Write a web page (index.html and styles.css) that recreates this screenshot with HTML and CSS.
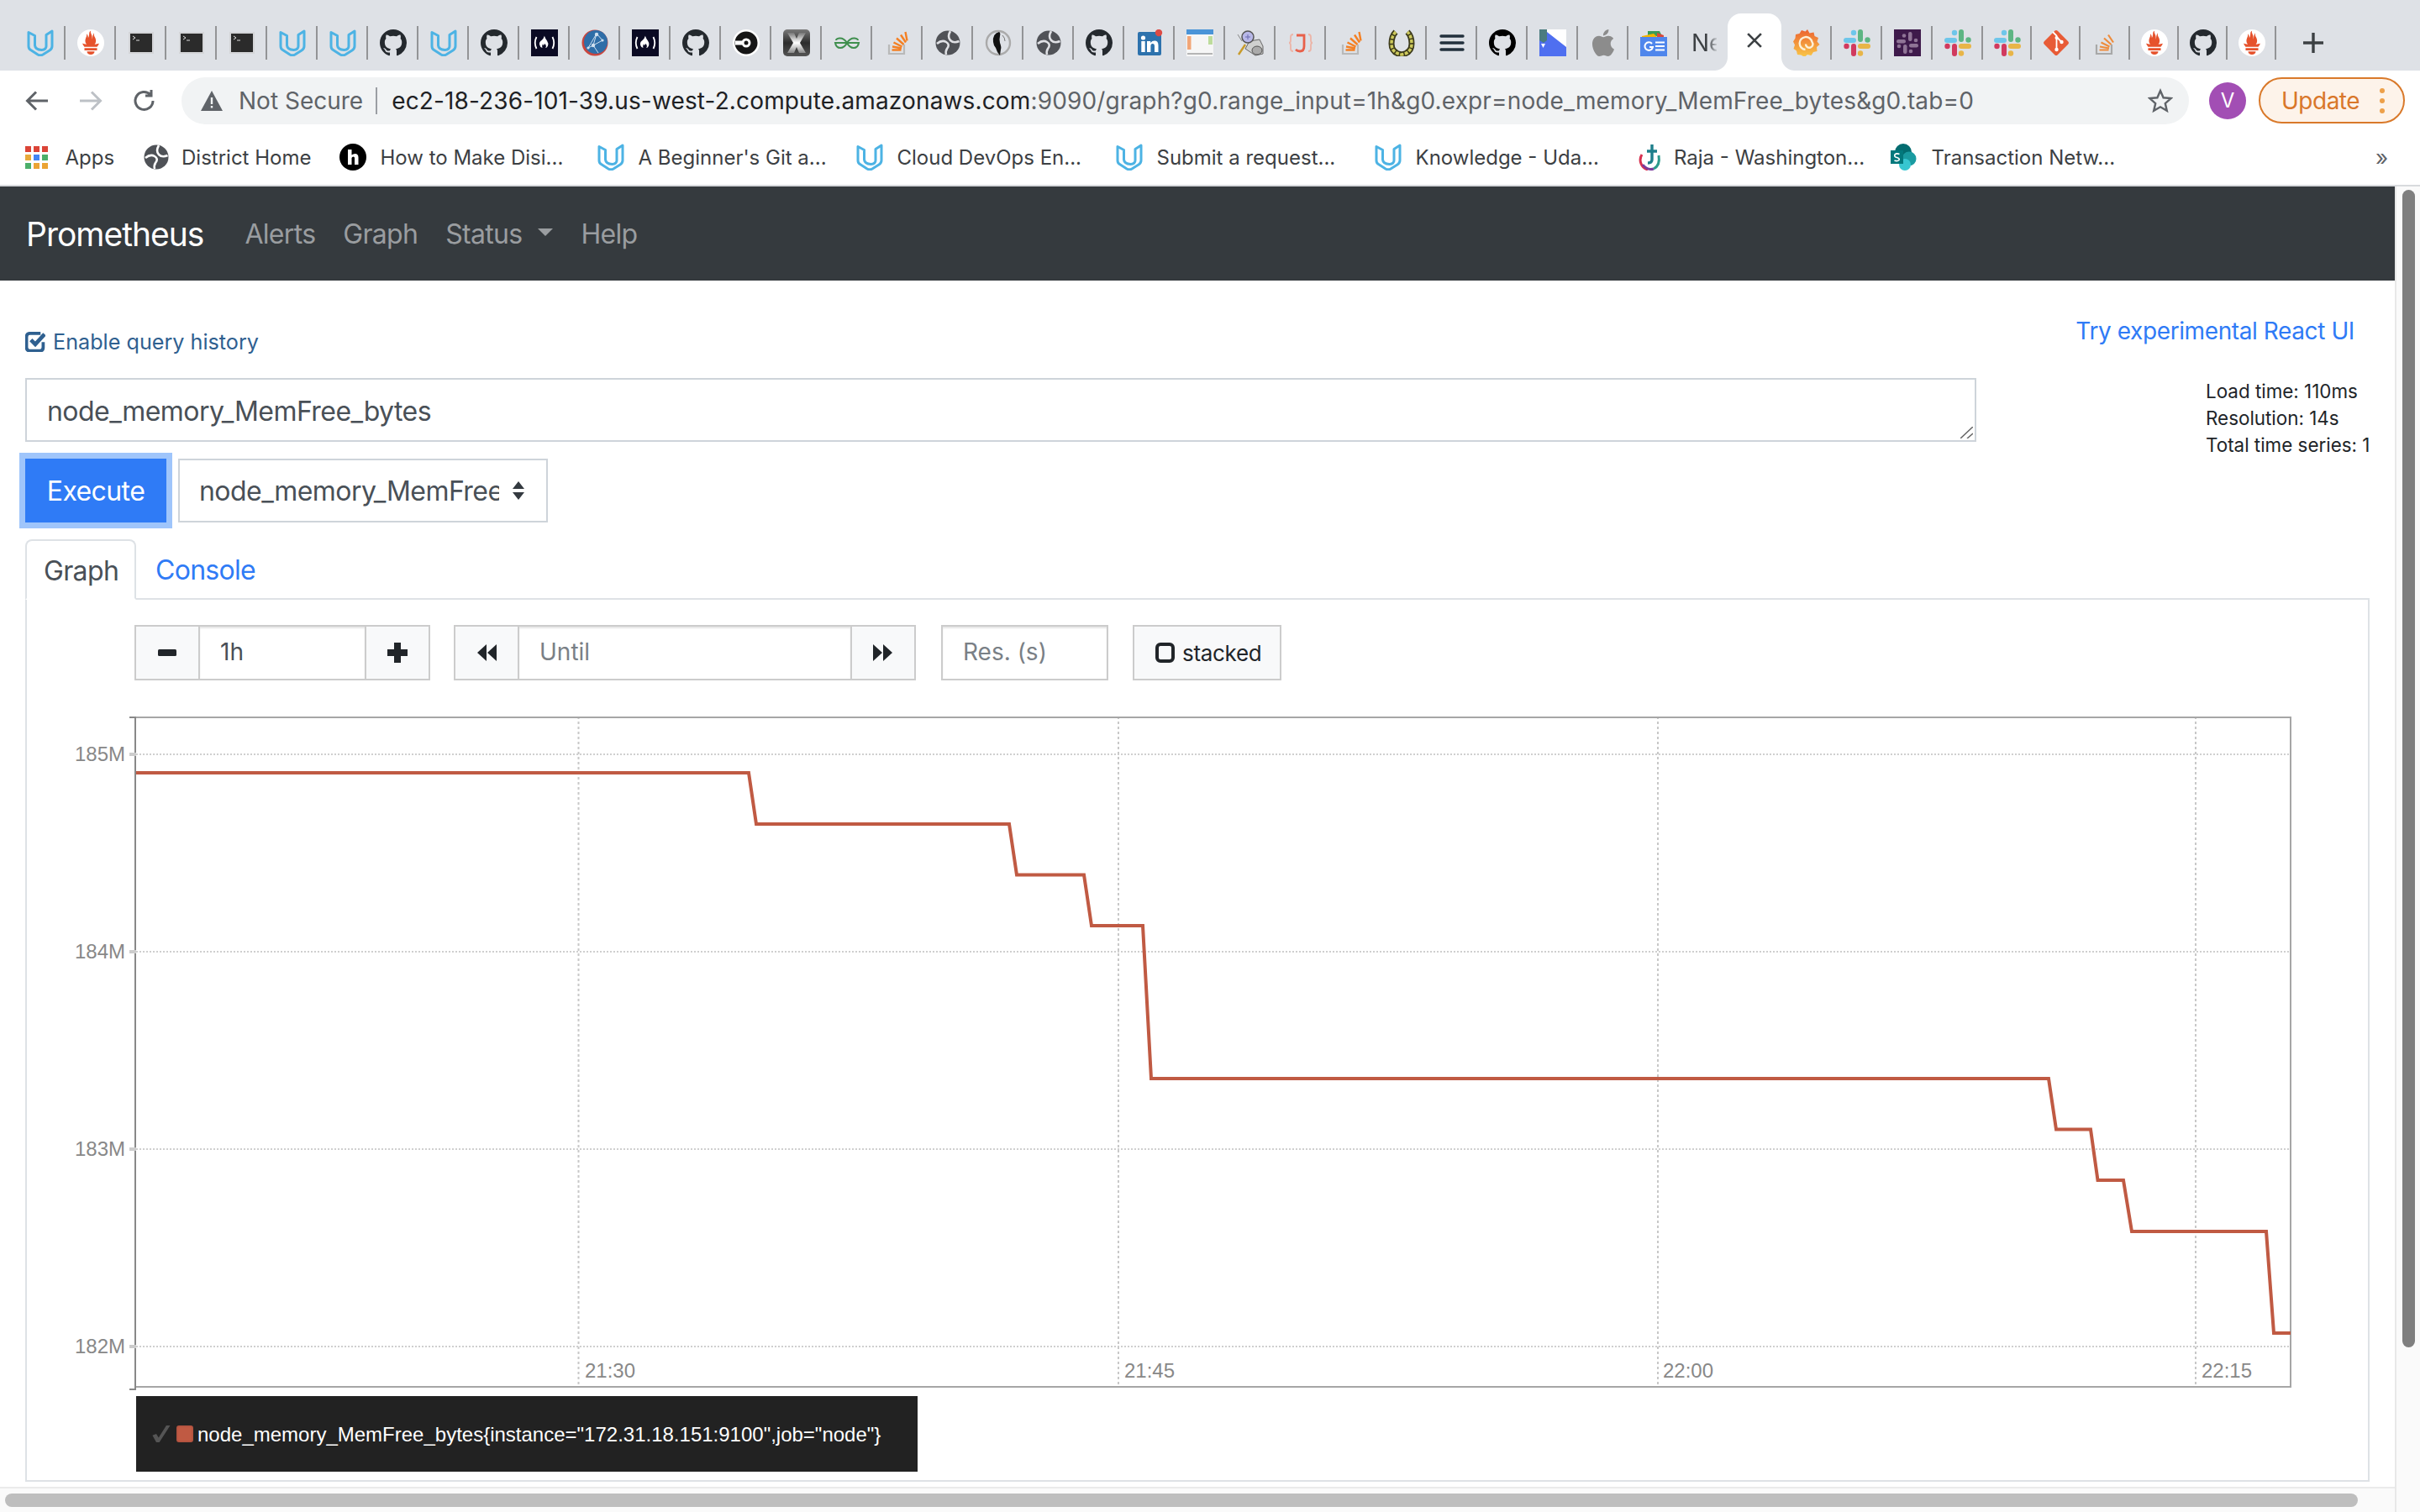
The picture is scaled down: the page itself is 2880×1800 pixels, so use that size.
FILE: index.html
```html
<!DOCTYPE html>
<html lang="en">
<head>
<meta charset="utf-8">
<title>Prometheus Time Series Collection and Processing Server</title>
<link rel="stylesheet" href="styles.css">
</head>
<body>
<svg class="sprite" xmlns="http://www.w3.org/2000/svg">
  <defs>
    <linearGradient id="gx" x1="0" y1="0" x2="0" y2="1"><stop offset="0" stop-color="#7a7a7a"/><stop offset=".5" stop-color="#2c2c2c"/><stop offset="1" stop-color="#555"/></linearGradient>
    <linearGradient id="gxw" x1="0" y1="0" x2="0" y2="1"><stop offset="0" stop-color="#777"/><stop offset=".5" stop-color="#fff"/><stop offset="1" stop-color="#888"/></linearGradient>
    <linearGradient id="gg" x1="0" y1="0" x2="0" y2="1"><stop offset="0" stop-color="#ec6230"/><stop offset="1" stop-color="#f9c848"/></linearGradient>
  </defs>
  <symbol id="u" viewBox="0 0 32 32"><path d="M2 3.500V20q0 3 2.500 4.600L13 30q3 1.600 6 0l8-5q3-2 3-5V2l-7 4.500V20q0 4-5.500 4.500Q10 24 9.500 19V7.500z" fill="none" stroke="#4db3e4" stroke-width="3" stroke-linejoin="round"/></symbol>
  <symbol id="pw" viewBox="0 0 24 24"><circle cx="12" cy="12" r="12" fill="#fff"/><path fill="#e6522c" d="M12 22.460c-1.885 0-3.414-1.260-3.414-2.814h6.828c0 1.553-1.528 2.813-3.414 2.813zm5.640-3.745H6.360v-2.046h11.280v2.046zm-.04-3.098H6.391c-.037-.043-.075-.086-.111-.13-1.155-1.401-1.427-2.133-1.690-2.879-.005-.025 1.400.287 2.395.511 0 0 .513.119 1.262.255-.72-.843-1.147-1.915-1.147-3.010 0-2.406 1.845-4.508 1.180-6.207.648.053 1.340 1.367 1.387 3.422.689-.951.977-2.690.977-3.755 0-1.103.727-2.385 1.454-2.429-.648 1.069.168 1.984.894 4.256.272.854.237 2.290.447 3.201.07-1.892.395-4.652 1.595-5.605-.529 1.200.079 2.702.494 3.424.671 1.164 1.078 2.047 1.078 3.716a4.642 4.642 0 01-1.110 2.996c.792-.149 1.340-.283 1.340-.283l2.573-.502s-.374 1.538-1.813 3.019z"/></symbol>
  <symbol id="t" viewBox="0 0 32 32"><rect x="1" y="3" width="30" height="26" fill="#d4d5d8"/><rect x="3" y="5" width="26" height="22" fill="#2b2b2b"/><path d="M6 8l3 2-3 2" fill="none" stroke="#ddd" stroke-width="1"/><path d="M10 13h4" stroke="#ddd" stroke-width="1"/></symbol>
  <symbol id="g" viewBox="0 0 16 16"><path fill="#24292e" fill-rule="evenodd" d="M8 0C3.580 0 0 3.580 0 8c0 3.540 2.290 6.530 5.470 7.590.4.07.55-.17.55-.38 0-.19-.01-.82-.01-1.490-2.010.37-2.530-.49-2.690-.94-.09-.23-.48-.94-.82-1.130-.28-.15-.68-.52-.01-.53.63-.01 1.080.58 1.230.82.72 1.210 1.870.87 2.330.66.07-.52.28-.87.51-1.070-1.780-.2-3.640-.89-3.640-3.950 0-.87.31-1.590.82-2.150-.08-.2-.36-1.020.08-2.120 0 0 .67-.21 2.200.82.64-.18 1.320-.27 2-.27.68 0 1.360.09 2 .27 1.530-1.040 2.200-.82 2.200-.82.44 1.100.16 1.920.08 2.120.51.56.82 1.270.82 2.150 0 3.070-1.870 3.750-3.650 3.950.29.25.54.73.54 1.480 0 1.070-.01 1.930-.01 2.200 0 .21.15.46.55.38A8.013 8.013 0 0016 8c0-4.420-3.580-8-8-8z"/></symbol>
  <symbol id="gb" viewBox="0 0 16 16"><path fill="#000" fill-rule="evenodd" d="M8 0C3.580 0 0 3.580 0 8c0 3.540 2.290 6.530 5.470 7.590.4.07.55-.17.55-.38 0-.19-.01-.82-.01-1.490-2.010.37-2.530-.49-2.690-.94-.09-.23-.48-.94-.82-1.130-.28-.15-.68-.52-.01-.53.63-.01 1.080.58 1.230.82.72 1.210 1.870.87 2.330.66.07-.52.28-.87.51-1.070-1.780-.2-3.640-.89-3.640-3.950 0-.87.31-1.590.82-2.150-.08-.2-.36-1.020.08-2.120 0 0 .67-.21 2.200.82.64-.18 1.320-.27 2-.27.68 0 1.360.09 2 .27 1.530-1.040 2.200-.82 2.200-.82.44 1.100.16 1.920.08 2.120.51.56.82 1.270.82 2.150 0 3.070-1.870 3.750-3.650 3.950.29.25.54.73.54 1.480 0 1.070-.01 1.930-.01 2.200 0 .21.15.46.55.38A8.013 8.013 0 0016 8c0-4.420-3.580-8-8-8z"/></symbol>
  <symbol id="f" viewBox="0 0 32 32"><rect width="32" height="32" fill="#0a0a23"/><path d="M6.500 9Q3 16 6.500 23M25.500 9Q29 16 25.500 23" fill="none" stroke="#fff" stroke-width="1.800"/><path d="M16 8q1 3 3 5.500 2 3 1 6-1 2.500-3 2.500 2-2-.5-5-1.500 2-2 2-.5-1 0-2-2 1.500-1 5-3-1-3.500-4-.5-3 2.500-5 2.500-2 3.500-5.500z" fill="#fff"/></symbol>
  <symbol id="wb" viewBox="0 0 32 32"><circle cx="16" cy="16" r="15.500" fill="#c9463f"/><circle cx="17" cy="15" r="14" fill="#2f6ea8"/><path d="M8 22L18 5M18 5l7 8M18 5l-4 14M8 22l6-3 11-6M14 19l6 9" stroke="#cfe0ef" stroke-width="1" fill="none"/><circle cx="18" cy="6" r="2.200" fill="#cfe0ef"/><circle cx="14" cy="19" r="2.200" fill="#cfe0ef"/><circle cx="25" cy="13" r="1.600" fill="#cfe0ef"/><circle cx="8" cy="22" r="1.600" fill="#cfe0ef"/></symbol>
  <symbol id="ci" viewBox="0 0 32 32"><circle cx="16" cy="16" r="16" fill="#fff"/><circle cx="16" cy="16" r="13.500" fill="#161616"/><path d="M3 13.500h8v5H3z" fill="#fff"/><circle cx="16" cy="16" r="5.500" fill="#fff"/><circle cx="16" cy="16" r="2.500" fill="#161616"/></symbol>
  <symbol id="x" viewBox="0 0 32 32"><rect width="32" height="32" rx="5" fill="url(#gx)"/><path d="M5 4h8l3 7 3-7h8l-7 12 7 12h-8l-3-7-3 7H5l7-12z" fill="url(#gxw)"/></symbol>
  <symbol id="gk" viewBox="0 0 32 32"><path d="M16 16Q12 10 7 10.500 3 11 3 13M16 16H2q1 6 6 6 5 0 8-6zM16 16q4-6 9-5.500 4 .5 4 2.500M16 16h14q-1 6-6 6-5 0-8-6z" fill="none" stroke="#3f8f4e" stroke-width="2"/></symbol>
  <symbol id="so" viewBox="0 0 32 32"><path d="M6 18v11h18V18" fill="none" stroke="#b9b9b9" stroke-width="2.200"/><path d="M9.500 24.500h11M10 20.500l11 2M11.500 15.500l10 5M15 10.500l8.500 7.500M20 6.500l6 9M25.500 3l2 10.500" fill="none" stroke="#f48024" stroke-width="2.400"/></symbol>
  <symbol id="sog" viewBox="0 0 32 32"><path d="M6 18v11h18V18" fill="none" stroke="#a8a8a8" stroke-width="2.200"/><path d="M9.500 24.500h11M10 20.500l11 2M11.500 15.500l10 5M15 10.500l8.500 7.500M20 6.500l6 9" fill="none" stroke="#ee8c3c" stroke-width="2.200"/></symbol>
  <symbol id="w" viewBox="0 0 32 32"><circle cx="16" cy="16" r="14.500" fill="#505257"/><path d="M3 17Q9 12 14 15q5 3 1 8-2 3-1 7M29.500 14Q23 17 19 13 15 9 19 2" fill="none" stroke="#e0e1e5" stroke-width="2.600"/></symbol>
  <symbol id="pg" viewBox="0 0 32 32"><circle cx="16" cy="16" r="14" fill="none" stroke="#aaa" stroke-width="2.400"/><path d="M10 15q-1-10 7-12 2 1 1 5-1 4 0 8 2 5 1 8l-1 7-3-4-2-5-2-3z" fill="#111"/><path d="M21 7q3 3 3 7" stroke="#777" fill="none"/></symbol>
  <symbol id="li" viewBox="0 0 32 32"><rect x="2" y="3" width="28" height="28" rx="2" fill="#2d72ad"/><circle cx="8.500" cy="10" r="2.600" fill="#fff"/><path d="M6.300 14h4.400v13H6.300zM13 14h4.200v2q2-2.400 4.800-2.400 4.500 0 4.500 5.400v8H22v-7q0-3-2.300-3-2.300 0-2.300 3v7H13z" fill="#fff"/><circle cx="27" cy="4" r="4.200" fill="#dd4b45"/></symbol>
  <symbol id="win" viewBox="0 0 32 32"><rect width="32" height="32" fill="#f6f6f6"/><rect width="32" height="6" fill="#4a94d8"/><rect x="1" y="8" width="4.500" height="16" fill="#f1a678"/><rect x="26" y="8" width="5" height="10" fill="#bddc9c"/><rect x="1" y="28" width="30" height="2" fill="#b5b5b5"/></symbol>
  <symbol id="mg" viewBox="0 0 32 32"><path d="M15 14l12-2 4 8v9l-9 2-12-8z" fill="#cfd0cf" stroke="#666"/><ellipse cx="24" cy="25" rx="6" ry="5" fill="#aaa" stroke="#555"/><path d="M2 30l8-12" stroke="#c89b2a" stroke-width="2.400"/><path d="M1 6l5 8" stroke="#888"/><circle cx="13" cy="9" r="7" fill="#b8b8e8" stroke="#555" stroke-width="1.500"/><path d="M10 9h6M13 6v6" stroke="#6a6ab0"/></symbol>
  <symbol id="j" viewBox="0 0 32 32"><path d="M7 6Q4 6 4 9v4q0 3-2 3 2 0 2 3v4q0 3 3 3M25 6q3 0 3 3v4q0 3 2 3-2 0-2 3v4q0 3-3 3" fill="none" stroke="#ecb5a8" stroke-width="1.800"/><path d="M11 7h9v13q0 6-5 6-3 0-5-2" fill="none" stroke="#e8604a" stroke-width="2.800"/></symbol>
  <symbol id="hs" viewBox="0 0 32 32"><path d="M9 3Q4 8 4 17q0 11 12 13 12-2 12-13 0-9-5-14" fill="none" stroke="#3d3b1c" stroke-width="7"/><path d="M9 3Q4 8 4 17q0 11 12 13 12-2 12-13 0-9-5-14" fill="none" stroke="#cdc95c" stroke-width="3.500" stroke-dasharray="4 1.500"/></symbol>
  <symbol id="m" viewBox="0 0 32 32"><path d="M3 8h26M3 16h26M3 24h26" stroke="#22303c" stroke-width="3.400" stroke-linecap="round"/></symbol>
  <symbol id="dc" viewBox="0 0 32 32"><rect width="32" height="32" fill="#fff"/><path d="M9 3L32 21v11H0V0h9z" fill="#4f6ff0"/><path d="M0 0h9v13l-4 3-5-3z" fill="#4b7c80"/><path d="M2 17h5l-2.500 5z" fill="#fff"/></symbol>
  <symbol id="ap" viewBox="0 0 24 24"><path fill="#8c8c8c" d="M12.152 6.896c-.948 0-2.415-1.078-3.960-1.040-2.040.027-3.910 1.183-4.961 3.014-2.117 3.675-.546 9.103 1.519 12.090 1.013 1.454 2.208 3.090 3.792 3.039 1.520-.065 2.090-.987 3.935-.987 1.831 0 2.350.987 3.960.948 1.637-.026 2.676-1.480 3.676-2.948 1.156-1.688 1.636-3.325 1.662-3.415-.039-.013-3.182-1.221-3.220-4.857-.026-3.040 2.480-4.494 2.597-4.559-1.429-2.090-3.623-2.324-4.390-2.376-2-.156-3.675 1.090-4.610 1.090zM15.530 3.830c.843-1.012 1.400-2.427 1.245-3.830-1.207.052-2.662.805-3.532 1.818-.78.896-1.454 2.338-1.273 3.714 1.338.104 2.715-.688 3.559-1.701"/></symbol>
  <symbol id="gn" viewBox="0 0 32 32"><path d="M9 2h14l3 6H9z" fill="#3a9b58"/><path d="M20 4l8 3v2h-8z" fill="#d9483b"/><path d="M2 8l14-3 4 4H2z" fill="#f4b400"/><rect y="9" width="32" height="23" fill="#4f86ec"/><path d="M14 17a4.800 4.800 0 1 0 1 4h-4" fill="none" stroke="#fff" stroke-width="2"/><path d="M18 15.500h11M18 20h11M18 24.500h11" stroke="#fff" stroke-width="2"/></symbol>
  <symbol id="gf" viewBox="0 0 32 32"><path d="M17 0l2.500 4.500 5-1 1 4.500 4.500 2-1.500 4.500 3 3.500-3.500 3 .5 5-4.500 1-2.500 4-4.500-1-3.500 3-4-2.500-4.500-.5-1-4.500-3.500-2.500 1.500-4.500-2-4 2.500-4 .5-4.500 4.500-1 2.500-4 4.500 1.500z" fill="url(#gg)"/><path d="M14.500 24a7.500 7.500 0 1 1 8-9 4.200 4.200 0 1 1-7.500 2.500" fill="none" stroke="#fdf0d8" stroke-width="2.400"/></symbol>
  <symbol id="sl" viewBox="0 0 32 32"><rect x="0" y="10" width="15" height="6" rx="3" fill="#6ec6ea"/><circle cx="12" cy="4" r="3.200" fill="#6ec6ea"/><rect x="17" y="0" width="6" height="15" rx="3" fill="#5db583"/><circle cx="28.500" cy="12.500" r="3.200" fill="#5db583"/><rect x="9" y="17" width="6" height="15" rx="3" fill="#d13a5e"/><circle cx="3.500" cy="20" r="3.200" fill="#d13a5e"/><rect x="17" y="17" width="15" height="6" rx="3" fill="#e8b548"/><circle cx="20" cy="28.500" r="3.200" fill="#e8b548"/></symbol>
  <symbol id="sd" viewBox="0 0 32 32"><rect width="32" height="32" fill="#3e1a4b"/><g fill="#8f7496"><rect x="3" y="12" width="11" height="4.500" rx="2.200"/><circle cx="12" cy="7.500" r="2.300"/><rect x="17" y="3" width="4.500" height="11" rx="2.200"/><circle cx="26" cy="13" r="2.300"/><rect x="11" y="18" width="4.500" height="11" rx="2.200"/><circle cx="6" cy="20" r="2.300"/><rect x="18" y="17" width="11" height="4.500" rx="2.200"/><circle cx="20" cy="26" r="2.300"/></g></symbol>
  <symbol id="gt" viewBox="0 0 32 32"><rect x="4.700" y="4.700" width="22.600" height="22.600" rx="2.500" transform="rotate(45 16 16)" fill="#e85b36"/><path d="M12 3l4.500 4.500v16M16.500 9l6 6" fill="none" stroke="#fff" stroke-width="1.800"/><circle cx="16.500" cy="24" r="2.200" fill="#fff"/><circle cx="22.500" cy="15" r="2.200" fill="#fff"/><circle cx="16.500" cy="10" r="2" fill="#fff"/></symbol>
  <symbol id="globeb" viewBox="0 0 32 32"><circle cx="16" cy="16" r="14.500" fill="#4f5257"/><path d="M3 17Q9 12 14 15q5 3 1 8-2 3-1 7M29.500 14Q23 17 19 13 15 9 19 2" fill="none" stroke="#fff" stroke-width="2.600"/></symbol>
  <symbol id="hi" viewBox="0 0 32 32"><circle cx="16" cy="16" r="16" fill="#000"/><path d="M10 7h4.500v6.500q2-1.500 4-1.500 4 0 4 4.500V25H18v-8q0-1.500-1.500-1.500t-2 1.500v8H10z" fill="#fff"/></symbol>
  <symbol id="ra" viewBox="0 0 32 32"><path d="M6 13A12 12 0 0 0 13 31" fill="none" stroke="#d7304f" stroke-width="3"/><path d="M7 25q5 7 13 5" fill="none" stroke="#7a3b9c" stroke-width="3"/><path d="M20 30q8-4 6-16" fill="none" stroke="#2d9a8c" stroke-width="3"/><path d="M18 1v18q0 4-5 4M12 9h12" fill="none" stroke="#1e7f8b" stroke-width="3.400"/></symbol>
  <symbol id="sp" viewBox="0 0 32 32"><circle cx="15" cy="10" r="10" fill="#036c70"/><circle cx="22" cy="18" r="8.500" fill="#1a9ba1"/><circle cx="17" cy="25" r="7" fill="#37c6d0"/><rect x="0" y="8" width="15" height="16" fill="#03787c"/><path d="M10.500 12.500Q7 11 5 13q-1 3 2.500 3.500 3.500 1 2.500 3-2 2-5.500.500" fill="none" stroke="#fff" stroke-width="1.700"/></symbol>
</svg>

<header class="chrome">
  <div class="tabstrip">
    <div class="tab"><svg class="ico"><use href="#u"/></svg></div>
    <div class="tab"><svg class="ico"><use href="#pw"/></svg></div>
    <div class="tab"><svg class="ico"><use href="#t"/></svg></div>
    <div class="tab"><svg class="ico"><use href="#t"/></svg></div>
    <div class="tab"><svg class="ico"><use href="#t"/></svg></div>
    <div class="tab"><svg class="ico"><use href="#u"/></svg></div>
    <div class="tab"><svg class="ico"><use href="#u"/></svg></div>
    <div class="tab"><svg class="ico"><use href="#g"/></svg></div>
    <div class="tab"><svg class="ico"><use href="#u"/></svg></div>
    <div class="tab"><svg class="ico"><use href="#g"/></svg></div>
    <div class="tab"><svg class="ico"><use href="#f"/></svg></div>
    <div class="tab"><svg class="ico"><use href="#wb"/></svg></div>
    <div class="tab"><svg class="ico"><use href="#f"/></svg></div>
    <div class="tab"><svg class="ico"><use href="#g"/></svg></div>
    <div class="tab"><svg class="ico"><use href="#ci"/></svg></div>
    <div class="tab"><svg class="ico"><use href="#x"/></svg></div>
    <div class="tab"><svg class="ico"><use href="#gk"/></svg></div>
    <div class="tab"><svg class="ico"><use href="#so"/></svg></div>
    <div class="tab"><svg class="ico"><use href="#w"/></svg></div>
    <div class="tab"><svg class="ico"><use href="#pg"/></svg></div>
    <div class="tab"><svg class="ico"><use href="#w"/></svg></div>
    <div class="tab"><svg class="ico"><use href="#g"/></svg></div>
    <div class="tab"><svg class="ico"><use href="#li"/></svg></div>
    <div class="tab"><svg class="ico"><use href="#win"/></svg></div>
    <div class="tab"><svg class="ico"><use href="#mg"/></svg></div>
    <div class="tab"><svg class="ico"><use href="#j"/></svg></div>
    <div class="tab"><svg class="ico"><use href="#so"/></svg></div>
    <div class="tab"><svg class="ico"><use href="#hs"/></svg></div>
    <div class="tab"><svg class="ico"><use href="#m"/></svg></div>
    <div class="tab"><svg class="ico"><use href="#gb"/></svg></div>
    <div class="tab"><svg class="ico"><use href="#dc"/></svg></div>
    <div class="tab"><svg class="ico"><use href="#ap"/></svg></div>
    <div class="tab"><svg class="ico"><use href="#gn"/></svg></div>
    <div class="tab-title"><span>Ne</span></div>
    <div class="tab-active"><svg class="close" viewBox="0 0 16 16"><path d="M1 1l14 14M15 1L1 15"/></svg></div>
    <div class="tab"><svg class="ico"><use href="#gf"/></svg></div>
    <div class="tab"><svg class="ico"><use href="#sl"/></svg></div>
    <div class="tab"><svg class="ico"><use href="#sd"/></svg></div>
    <div class="tab"><svg class="ico"><use href="#sl"/></svg></div>
    <div class="tab tab-n"><svg class="ico"><use href="#sl"/></svg></div>
    <div class="tab tab-n"><svg class="ico"><use href="#gt"/></svg></div>
    <div class="tab tab-n"><svg class="ico"><use href="#sog"/></svg></div>
    <div class="tab tab-n"><svg class="ico"><use href="#pw"/></svg></div>
    <div class="tab tab-n"><svg class="ico"><use href="#g"/></svg></div>
    <div class="tab tab-n"><svg class="ico"><use href="#pw"/></svg></div>
    <svg class="newtab" viewBox="0 0 24 24"><path d="M12 0v24M0 12h24"/></svg>
  </div>

  <div class="toolbar">
    <svg class="nav-ico" viewBox="0 0 28 28"><path d="M27 14H3M13 3.500L2.500 14 13 24.500"/></svg>
    <svg class="nav-ico nav-off" viewBox="0 0 28 28"><path d="M1 14h24M15 3.500L25.500 14 15 24.500"/></svg>
    <svg class="nav-ico" viewBox="0 0 28 28"><path d="M24 14a10.500 10.500 0 1 1-3-7.400M22 1v7h-7"/></svg>
    <div class="omnibox">
      <svg class="warn" viewBox="0 0 26 24"><path d="M13 0l13 24H0z"/><path class="warn-mark" d="M11.800 8h2.400v8h-2.400zM11.800 18h2.400v2.400h-2.400z"/></svg>
      <span class="not-secure">Not Secure</span>
      <span class="url"><span class="url-host">ec2-18-236-101-39.us-west-2.compute.amazonaws.com</span>:9090/graph?g0.range_input=1h&amp;g0.expr=node_memory_MemFree_bytes&amp;g0.tab=0</span>
      <svg class="star" viewBox="0 0 30 30"><path d="M15 3l3.600 8.300 9 .8-6.800 6 2 8.800L15 22.300l-7.800 4.600 2-8.800-6.800-6 9-.8z"/></svg>
    </div>
    <div class="avatar">V</div>
    <div class="update"><span>Update</span><svg class="dots" viewBox="0 0 8 32"><circle cx="4" cy="4" r="3"/><circle cx="4" cy="16" r="3"/><circle cx="4" cy="28" r="3"/></svg></div>
  </div>

  <div class="bookmarks">
    <div class="bm"><svg class="apps" viewBox="0 0 27 27"><path fill="#db4437" d="M0 0h7v7H0zM10 0h7v7h-7zM20 0h7v7h-7z"/><path fill="#e8a93a" d="M0 10h7v7H0z"/><path fill="#4285f4" d="M10 10h7v7h-7z"/><path fill="#4caf6a" d="M20 10h7v7h-7zM0 20h7v7H0z"/><path fill="#eba434" d="M10 20h7v7h-7zM20 20h7v7h-7z"/></svg><span class="bm-apps">Apps</span></div>
    <div class="bm bm-tight"><svg class="ico"><use href="#globeb"/></svg><span>District Home</span></div>
    <div class="bm"><svg class="ico"><use href="#hi"/></svg><span>How to Make Disi...</span></div>
    <div class="bm"><svg class="ico"><use href="#u"/></svg><span>A Beginner's Git a...</span></div>
    <div class="bm"><svg class="ico"><use href="#u"/></svg><span>Cloud DevOps En...</span></div>
    <div class="bm"><svg class="ico"><use href="#u"/></svg><span>Submit a request...</span></div>
    <div class="bm"><svg class="ico"><use href="#u"/></svg><span>Knowledge - Uda...</span></div>
    <div class="bm bm-raja"><svg class="ico"><use href="#ra"/></svg><span>Raja - Washington...</span></div>
    <div class="bm"><svg class="ico"><use href="#sp"/></svg><span>Transaction Netw...</span></div>
    <div class="bm-more">»</div>
  </div>
</header>

<div class="viewport">
  <div class="page-col">
    <main class="page">
      <nav class="navbar">
        <a class="brand">Prometheus</a>
        <a class="nav-link">Alerts</a>
        <a class="nav-link">Graph</a>
        <a class="nav-link nav-status">Status<i class="caret"></i></a>
        <a class="nav-link">Help</a>
      </nav>
      <div class="container">
        <div class="head-row">
          <div class="history">
            <svg class="history-ico" viewBox="0.500 0.500 23 22.500"><path class="hb" d="M18 2H6Q2 2 2 6v12q0 4 4 4h11q4 0 4-4v-6"/><path class="hc" d="M7 9.500l5 5L22.500 3"/></svg>
            <span>Enable query history</span>
          </div>
          <a class="react-link">Try experimental React UI</a>
        </div>
        <div class="query-grid">
          <div class="query-col">
            <div class="expr-wrap">
              <textarea class="expr" spellcheck="false">node_memory_MemFree_bytes</textarea>
              <svg class="grip" viewBox="0 0 15 14"><path d="M0 14L15 0M8 14l7-6"/></svg>
            </div>
            <div class="exec-row">
              <button class="execute">Execute</button>
              <div class="metric-select"><span class="metric-text">node_memory_MemFree_bytes</span><svg class="updown" viewBox="0 0 16 24"><path d="M8 1l7 9H1zM8 23l-7-9h14z"/></svg></div>
            </div>
          </div>
          <div class="stats">
            <div>Load time: 110ms</div>
            <div>Resolution: 14s</div>
            <div>Total time series: 1</div>
          </div>
        </div>
        <div class="tabs">
          <div class="tabs-item tabs-active">Graph</div>
          <div class="tabs-item tabs-link">Console</div>
        </div>
        <section class="tab-content">
          <div class="controls">
            <div class="group group-range">
              <div class="addon"><svg class="fa" viewBox="0 0 24 24"><rect x="1" y="8" width="22" height="8" rx="1.500"/></svg></div>
              <div class="field field-range">1h</div>
              <div class="addon"><svg class="fa" viewBox="0 0 24 24"><path d="M8 0h8v8h8v8h-8v8H8v-8H0V8h8z"/></svg></div>
            </div>
            <div class="group group-until">
              <div class="addon"><svg class="fa" viewBox="0 0 24 24"><path d="M12 2v20L1 12zM24 2v20L13 12z"/></svg></div>
              <div class="field field-ph field-until">Until</div>
              <div class="addon"><svg class="fa" viewBox="0 0 24 24"><path d="M12 2v20l11-10zM0 2v20l11-10z"/></svg></div>
            </div>
            <div class="group group-res"><div class="field field-ph">Res. (s)</div></div>
            <div class="group stacked"><i class="stacked-box"></i><span>stacked</span></div>
          </div>
          <svg class="chart" viewBox="32 810 2786 850">
            <path class="grid-h" d="M162 898H2727M162 1133H2727M162 1368H2727M162 1603H2727"/>
            <path class="grid-v" d="M688.500 853V1652M1331 853V1652M1973 853V1652M2613 853V1652"/>
            <path class="frame" d="M162 854H2726V1651H162"/>
            <path class="axis-y" d="M161 853V1655M154 854H162M154 1654H162"/>
            <path class="tick" d="M154 898H162M154 1133H162M154 1368H162M154 1603H162"/>
            <polyline class="series" points="162,920 891,920 900,981 1201,981 1210,1041.500 1290,1041.500 1299,1102 1360,1102 1370,1284 2438,1284 2447,1344.500 2488,1344.500 2496.500,1405 2527,1405 2537,1466 2697,1466 2706,1587 2726,1587"/>
            <text class="lbl" x="149" y="906" text-anchor="end">185M</text>
            <text class="lbl" x="149" y="1141" text-anchor="end">184M</text>
            <text class="lbl" x="149" y="1376" text-anchor="end">183M</text>
            <text class="lbl" x="149" y="1611" text-anchor="end">182M</text>
            <text class="lbl" x="696" y="1640">21:30</text>
            <text class="lbl" x="1338" y="1640">21:45</text>
            <text class="lbl" x="1979" y="1640">22:00</text>
            <text class="lbl" x="2620" y="1640">22:15</text>
          </svg>
          <div class="legend">
            <svg class="legend-check" viewBox="0 0 24 24"><path d="M1 14l5-2 3 5L19 1h5L10 23H6z"/></svg>
            <i class="legend-swatch"></i>
            <span>node_memory_MemFree_bytes{instance="172.31.18.151:9100",job="node"}</span>
          </div>
        </section>
      </div>
    </main>
    <div class="hscroll"><div class="hthumb"></div></div>
  </div>
  <div class="vscroll"><div class="vthumb"></div></div>
</div>
</body>
</html>
```

FILE: styles.css
```css
* { box-sizing: border-box; }
html, body { margin: 0; padding: 0; height: 100%; overflow: hidden; background: #fff; }
body { display: flex; flex-direction: column; font-family: Inter, "Liberation Sans", sans-serif; color: #212529; }
.sprite { position: absolute; width: 0; height: 0; overflow: hidden; }

/* browser chrome */
.chrome { flex: 0 0 222px; display: flex; flex-direction: column; }
.tabstrip { height: 84px; background: #dee1e6; display: flex; align-items: flex-start; padding-left: 18px; }
.tab { width: 60px; height: 40px; margin-top: 31px; padding-left: 2px; border-right: 2px solid #939496; display: flex; align-items: center; justify-content: center; flex: none; }
.tab-n { width: 58.200px; }
.ico { width: 32px; height: 32px; flex: none; }
.tab-title { width: 58px; height: 40px; margin-top: 31px; padding-left: 15px; font-size: 28px; line-height: 40px; color: #3c4043; overflow: hidden; flex: none; }
.tab-title span { display: block; width: 30px; overflow: hidden; background: linear-gradient(90deg, #3c4043 65%, #dee1e6 105%); -webkit-background-clip: text; background-clip: text; color: transparent; }
.tab-active { width: 64px; height: 68px; margin-top: 16px; background: #fff; border-radius: 16px 16px 0 0; position: relative; display: flex; align-items: center; justify-content: center; padding-bottom: 4px; flex: none; }
.tab-active::before, .tab-active::after { content: ""; position: absolute; bottom: 0; width: 16px; height: 16px; }
.tab-active::before { left: -16px; background: radial-gradient(circle at 0 0, #dee1e6 15.500px, #fff 16.500px); }
.tab-active::after { right: -16px; background: radial-gradient(circle at 100% 0, #dee1e6 15.500px, #fff 16.500px); }
.close { width: 18px; height: 18px; fill: none; stroke: #3c4043; stroke-width: 2.400; }
.newtab { width: 24px; height: 24px; margin: 39px 0 0 32px; fill: none; stroke: #3c4043; stroke-width: 3.400; flex: none; }

.toolbar { height: 64px; background: #fff; display: flex; align-items: flex-start; padding: 8px 17px 0 30px; }
.nav-ico { width: 28px; height: 28px; margin: 14px 36px 0 0; fill: none; stroke: #5f6368; stroke-width: 3; flex: none; }
.nav-off { stroke: #bdc1c6; }
.omnibox { width: 2389px; height: 56px; margin-left: -6px; background: #f1f3f4; border-radius: 28px; display: flex; align-items: center; padding: 0 19px 0 23px; flex: none; }
.warn { width: 26px; height: 24px; fill: #5f6368; flex: none; }
.warn-mark { fill: #f1f3f4; }
.not-secure { margin-left: 19px; padding-right: 15px; border-right: 2px solid #9b9ea3; font-size: 28px; line-height: 32px; color: #5f6368; flex: none; }
.url { margin-left: 17px; font-size: 28px; line-height: 32px; color: #5f6368; white-space: nowrap; letter-spacing: .140px; }
.url-host { color: #202124; }
.star { width: 30px; height: 30px; margin-left: auto; fill: none; stroke: #5f6368; stroke-width: 2.400; flex: none; }
.avatar { width: 44px; height: 44px; margin: 6px 0 0 24px; border-radius: 50%; background: #a24eb4; color: #fff; font-size: 24px; line-height: 44px; text-align: center; flex: none; }
.update { width: 174px; height: 55px; margin-left: 15px; border: 2px solid #d9792a; border-radius: 28px; background: #fdf3ea; color: #d9772a; font-size: 28px; letter-spacing: -.500px; display: flex; align-items: center; padding-left: 25px; flex: none; }
.dots { width: 8px; height: 32px; margin-left: auto; margin-right: 21px; fill: #eda04a; flex: none; }

.bookmarks { height: 74px; background: #fff; border-bottom: 2px solid #d8dadd; display: grid; grid-template-columns: 140px 234px 307px 308px 309px 308px 312px 302px 570px 1fr; align-items: center; padding: 6px 0 0 30px; font-size: 24px; color: #3c4043; }
.bm { display: flex; align-items: center; gap: 16.500px; white-space: nowrap; }
.bm-tight { gap: 14px; }
.bm-raja { gap: 12px; }
.apps { width: 27px; height: 27px; flex: none; }
.bm-apps { margin-left: 4px; }
.bm-more { font-size: 26px; color: #5f6368; padding-left: 7px; }

/* viewport */
.viewport { flex: 1; display: flex; min-height: 0; }
.page-col { flex: 1; display: flex; flex-direction: column; min-width: 0; }
.page { flex: 1; min-height: 0; overflow: hidden; }
.hscroll { flex: 0 0 30px; background: #fafafa; border-top: 2px solid #ebebeb; padding: 6px 44px 0 6px; }
.hthumb { height: 16px; border-radius: 8px; background: #bebebe; }
.vscroll { flex: 0 0 30px; background: #fafafa; border-left: 2px solid #e8e8e8; padding: 4px 6px 0 7px; }
.vthumb { height: 1378px; border-radius: 8px; background: #7f7f7f; }

/* prometheus */
.navbar { height: 112px; background: #353a3e; display: flex; align-items: center; padding-left: 31px; }
.brand { font-size: 39px; letter-spacing: -1px; color: #fff; margin-right: 49px; }
.nav-link { font-size: 32px; letter-spacing: -.700px; color: #9a9da0; margin-right: 33px; }
.nav-status { display: flex; align-items: center; }
.caret { width: 0; height: 0; margin-left: 19px; border: 9px solid transparent; border-top-color: #9a9da0; border-bottom: 0; margin-top: -3px; }

.container { padding: 0 0 0 30px; }
.head-row { height: 116px; display: flex; justify-content: space-between; width: 2772px; }
.history { display: flex; align-items: center; gap: 9px; height: 30px; margin-top: 58px; font-size: 25.200px; color: #2f6090; }
.history-ico { width: 24px; height: 24px; fill: none; stroke: #2f6090; flex: none; }
.hb { stroke-width: 3.600; }
.hc { stroke-width: 4.400; }
.react-link { margin-top: 41px; font-size: 28px; letter-spacing: -.400px; line-height: 38px; height: 38px; color: #2f7bf6; }

.query-grid { display: grid; grid-template-columns: 2322px 1fr; }
.expr-wrap { position: relative; }
.expr { display: block; width: 2322px; height: 76px; padding: 20px 24px; border: 2px solid #ced4da; font-family: inherit; font-size: 32px; letter-spacing: -.550px; line-height: 36px; color: #495057; outline: none; background: #fff; overflow: hidden; border-radius: 0; resize: none; }
.grip { position: absolute; right: 4px; bottom: 4px; width: 15px; height: 14px; fill: none; stroke: #666; stroke-width: 1.500; }
.exec-row { display: flex; gap: 14px; margin-top: 20px; }
.execute { width: 168px; height: 76px; padding: 0; border: none; background: #2f7bf6; color: #fff; font-family: inherit; font-size: 32px; letter-spacing: -.600px; box-shadow: 0 0 0 7px #9fc5fb; }
.metric-select { width: 440px; height: 76px; border: 2px solid #ced4da; display: flex; align-items: center; padding-left: 23px; font-size: 32px; letter-spacing: -.550px; color: #495057; }
.metric-text { width: 357px; overflow: hidden; white-space: nowrap; flex: none; }
.updown { width: 16px; height: 24px; margin-left: 15px; fill: #343a40; flex: none; }
.stats { padding-left: 273px; font-size: 22.400px; line-height: 32px; color: #212529; }

.tabs { height: 72px; margin-top: 20px; width: 2790px; display: flex; border-bottom: 2px solid #dee2e6; font-size: 32px; letter-spacing: -.650px; }
.tabs-item { height: 72px; }
.tabs-active { width: 132px; padding-left: 20px; line-height: 71px; border: 2px solid #dee2e6; border-bottom: 2px solid #fff; border-radius: 8px 8px 0 0; color: #495057; }
.tabs-link { margin-left: 23px; line-height: 73px; color: #2f7bf6; letter-spacing: -.700px; }
.tab-content { width: 2790px; padding-top: 30px; border: 2px solid #dee2e6; border-top: 0; padding-bottom: 10px; }

.controls { display: flex; height: 66px; margin-left: 128px; font-size: 28px; }
.group { height: 66px; border: 2px solid #ccc; display: flex; flex: none; }
.group-range { width: 352px; }
.group-until { width: 550px; margin-left: 28px; }
.group-res { width: 199px; margin-left: 30px; }
.addon { width: 76px; background: #f8f9fa; display: flex; align-items: center; justify-content: center; flex: none; }
.addon:first-child { border-right: 2px solid #ccc; }
.addon:last-child { border-left: 2px solid #ccc; }
.fa { width: 24px; height: 24px; fill: #212529; flex: none; }
.field { flex: 1; padding-left: 24px; line-height: 61px; color: #495057; box-shadow: inset 0 2px 2px rgba(0,0,0,.1); }
.field-ph { color: #7a8086; }
.stacked { width: 177px; margin-left: 29px; background: #f8f9fa; align-items: center; padding-left: 25px; gap: 9px; font-size: 26px; letter-spacing: -.300px; color: #212529; }
.stacked-box { width: 23px; height: 24px; border: 4px solid #212529; border-radius: 6px; flex: none; }

.chart { display: block; width: 2786px; height: 850px; font-family: "Liberation Sans", Arial, sans-serif; }
.grid-h { fill: none; stroke: #cfcfcf; stroke-width: 2; stroke-dasharray: 2 2; }
.grid-v { fill: none; stroke: #c8c8c8; stroke-width: 2; stroke-dasharray: 3 3; }
.frame { fill: none; stroke: #a6a6a6; stroke-width: 2; }
.axis-y { fill: none; stroke: #888; stroke-width: 2; }
.tick { fill: none; stroke: #ccc; stroke-width: 4; }
.series { fill: none; stroke: #c05a43; stroke-width: 4; stroke-linejoin: miter; }
.lbl { font-size: 24px; fill: #888; }

.legend { width: 930px; height: 90px; margin: 2px 0 0 130px; background: #222; display: flex; align-items: center; padding: 2px 0 0 18px; font-family: "Liberation Sans", Arial, sans-serif; font-size: 24px; color: #fff; white-space: nowrap; }
.legend-check { width: 23px; height: 22px; margin-top: -2px; fill: #555; flex: none; }
.legend-swatch { width: 20px; height: 20px; margin: -2px 5px 0 7px; background: #c05a43; border: 2px solid #b55440; border-radius: 3px; flex: none; }
```
